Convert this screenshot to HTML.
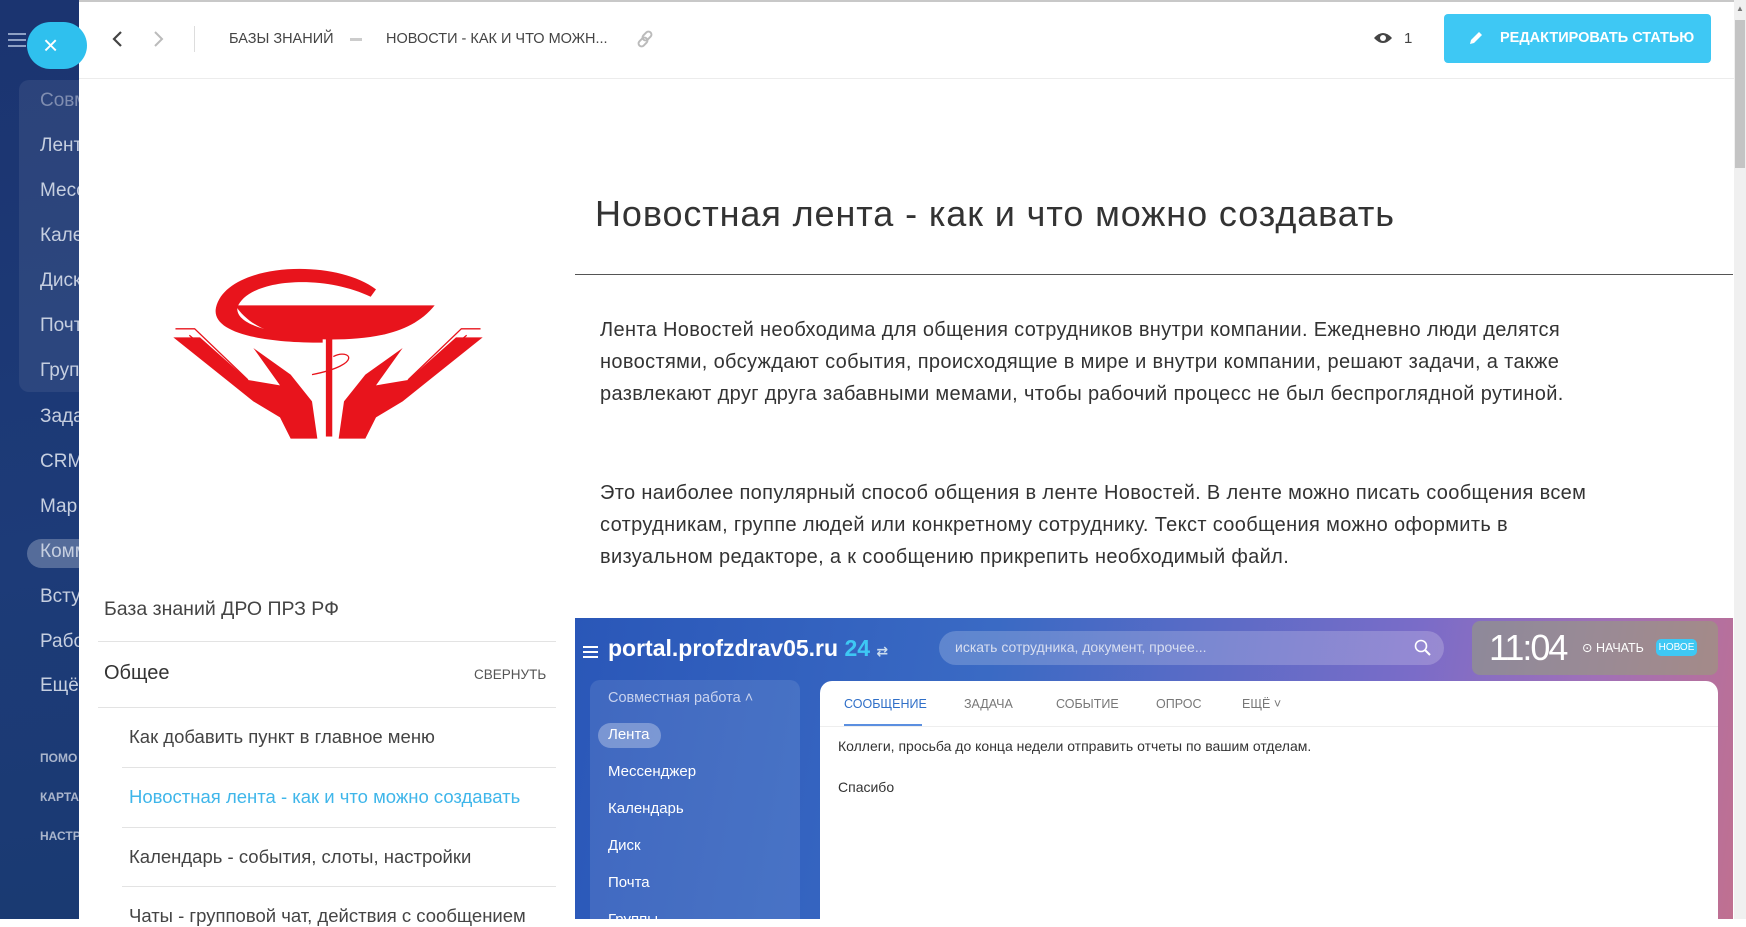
<!DOCTYPE html>
<html><head><meta charset="utf-8"><style>
*{margin:0;padding:0;box-sizing:border-box}
body{width:1746px;height:919px;overflow:hidden;position:relative;background:#fff;font-family:"Liberation Sans","DejaVu Sans",sans-serif;color:#333}
.a{position:absolute;white-space:nowrap}
#side{position:absolute;left:0;top:0;width:79px;height:919px;background:linear-gradient(170deg,#1b3470 0%,#1d3b78 60%,#1a3a72 100%);overflow:hidden}
#side .i{position:absolute;left:40px;font-size:19px;color:#c6cfe0}
#side .s{position:absolute;left:40px;font-size:12px;font-weight:bold;color:#aab5cc}
.hdr{font-size:14.5px;color:#444}
.p{position:absolute;left:600px;font-size:20px;line-height:32px;color:#333;white-space:nowrap;letter-spacing:0.35px}
.li{position:absolute;left:129px;font-size:18.5px;color:#444}
.ln{position:absolute;height:1px;background:#e3e3e3}
#shot{position:absolute;left:575px;top:618px;width:1158px;height:301px;background:linear-gradient(100deg,#2a57b8 0%,#3a6ac4 35%,#7a6cc8 70%,#a070b8 85%,#c07090 100%);overflow:hidden}
</style></head><body>

<div id="side">
  <div class="a" style="left:8px;top:33px;width:18px;height:2px;background:#8ea0c4;box-shadow:0 6px 0 #8ea0c4,0 12px 0 #8ea0c4"></div>
  <div class="a" style="left:19px;top:80px;width:70px;height:312px;background:rgba(255,255,255,0.07);border-radius:10px"></div>
  <div class="i" style="top:90px;color:#7f8db0">Совм</div>
  <div class="i" style="top:135px">Лент</div>
  <div class="i" style="top:180px">Месс</div>
  <div class="i" style="top:225px">Кале</div>
  <div class="i" style="top:270px">Диск</div>
  <div class="i" style="top:315px">Почт</div>
  <div class="i" style="top:360px">Груп</div>
  <div class="i" style="top:406px">Зада</div>
  <div class="i" style="top:451px">CRM</div>
  <div class="i" style="top:496px">Мар</div>
  <div class="a" style="left:27px;top:539px;width:70px;height:29px;background:rgba(255,255,255,0.25);border-radius:15px"></div>
  <div class="i" style="top:541px">Комм</div>
  <div class="i" style="top:586px">Всту</div>
  <div class="i" style="top:631px">Рабо</div>
  <div class="i" style="top:675px">Ещё</div>
  <div class="s" style="top:751px">ПОМО</div>
  <div class="s" style="top:790px">КАРТА</div>
  <div class="s" style="top:829px">НАСТР</div>
</div>
<div class="a" style="left:27px;top:22px;width:60px;height:47px;background:#2fc0ee;border-radius:24px"></div>
<div class="a" style="left:43px;top:30px;color:#fff;font-size:26px;line-height:30px">×</div>

<!-- header -->
<div class="a" style="left:79px;top:0;width:1655px;height:2px;background:#c8c8c8"></div>
<div class="a" style="left:79px;top:78px;width:1655px;height:1px;background:#ececec"></div>
<svg class="a" style="left:111px;top:30px" width="14" height="18"><path d="M10 2 L3 9 L10 16" stroke="#444" stroke-width="2.2" fill="none"/></svg>
<svg class="a" style="left:151px;top:30px" width="14" height="18"><path d="M4 2 L11 9 L4 16" stroke="#bbb" stroke-width="2" fill="none"/></svg>
<div class="a" style="left:194px;top:26px;width:1px;height:26px;background:#ddd"></div>
<div class="a hdr" style="left:229px;top:31px">БАЗЫ ЗНАНИЙ</div>
<div class="a" style="left:350px;top:38px;width:12px;height:3px;background:#ccc"></div>
<div class="a hdr" style="left:386px;top:31px">НОВОСТИ - КАК И ЧТО МОЖН...</div>
<svg class="a" style="left:637px;top:30px" width="18" height="18"><g stroke="#bbb" stroke-width="2" fill="none"><rect x="7" y="1" width="6" height="10" rx="3" transform="rotate(45 10 6)"/><rect x="3" y="7" width="6" height="10" rx="3" transform="rotate(45 6 12)"/></g></svg>
<svg class="a" style="left:1373px;top:31px" width="20" height="14"><path d="M1 7 Q10 -3 19 7 Q10 17 1 7Z" fill="#444"/><circle cx="10" cy="7" r="3" fill="#fff"/></svg>
<div class="a" style="left:1404px;top:30px;font-size:15px;color:#444">1</div>
<div class="a" style="left:1444px;top:14px;width:267px;height:49px;background:#3ec8f4;border-radius:4px"></div>
<svg class="a" style="left:1468px;top:30px" width="16" height="16"><path d="M2 14 L3 10 L11 2 L14 5 L6 13Z" fill="#fff"/></svg>
<div class="a" style="left:1500px;top:30px;font-size:14.5px;font-weight:bold;color:#fff">РЕДАКТИРОВАТЬ СТАТЬЮ</div>
<!-- scrollbar -->
<div class="a" style="left:1734px;top:0;width:12px;height:919px;background:#f0f0f0"></div>
<div class="a" style="left:1735px;top:20px;width:10px;height:148px;background:#c4c4c4"></div>
<div class="a" style="left:1736px;top:4px;font-size:8px;color:#777">▲</div>

<!-- logo -->
<svg class="a" style="left:168px;top:252px" width="320" height="192" viewBox="15 10 300 180" preserveAspectRatio="none">
<g fill="#e8141c">
<path d="M60 62 C70 20 170 15 210 45 L205 52 C160 30 90 35 80 62 C78 80 120 88 160 88 L160 95 C100 95 55 85 60 62Z"/>
<path d="M78 60 L265 60 C245 85 210 92 168 92 C125 92 95 85 78 60Z"/>
<rect x="163" y="88" width="6" height="95"/>
<path d="M20 90 L95 150 L120 165 L130 185 L155 185 L150 150 L130 125 L95 100 L120 135 L90 130 L45 90Z"/>
<path d="M310 90 L235 150 L210 165 L200 185 L175 185 L180 150 L200 125 L235 100 L210 135 L240 130 L285 90Z"/>
</g>
<g stroke="#e8141c" fill="none" stroke-width="1.2"><path d="M22 82 L40 82 L90 130 M35 88 L85 130"/><path d="M308 82 L290 82 L240 130 M295 88 L245 130"/><path d="M150 125 C200 115 185 100 170 108"/></g>
</svg>

<!-- left nav -->
<div class="a" style="left:104px;top:598px;font-size:19.5px;color:#444">База знаний ДРО ПРЗ РФ</div>
<div class="ln" style="left:98px;top:641px;width:458px"></div>
<div class="a" style="left:104px;top:662px;font-size:20px;color:#333">Общее</div>
<div class="a" style="left:474px;top:667px;font-size:13.5px;color:#555">СВЕРНУТЬ</div>
<div class="ln" style="left:98px;top:707px;width:458px"></div>
<div class="li" style="top:726px">Как добавить пункт в главное меню</div>
<div class="ln" style="left:122px;top:767px;width:434px"></div>
<div class="li" style="top:786px;color:#3fb6ea">Новостная лента - как и что можно создавать</div>
<div class="ln" style="left:122px;top:827px;width:434px"></div>
<div class="li" style="top:846px">Календарь - события, слоты, настройки</div>
<div class="ln" style="left:122px;top:886px;width:434px"></div>
<div class="li" style="top:905px">Чаты - групповой чат, действия с сообщением</div>

<!-- article -->
<div class="a" style="left:595px;top:193px;font-size:36px;letter-spacing:0.9px;color:#333">Новостная лента - как и что можно создавать</div>
<div class="a" style="left:575px;top:274px;width:1158px;height:1px;background:#555"></div>
<div class="p" style="top:314px">Лента Новостей необходима для общения сотрудников внутри компании. Ежедневно люди делятся<br>новостями, обсуждают события, происходящие в мире и внутри компании, решают задачи, а также<br>развлекают друг друга забавными мемами, чтобы рабочий процесс не был беспроглядной рутиной.</div>
<div class="p" style="top:477px">Это наиболее популярный способ общения в ленте Новостей. В ленте можно писать сообщения всем<br>сотрудникам, группе людей или конкретному сотруднику. Текст сообщения можно оформить в<br>визуальном редакторе, а к сообщению прикрепить необходимый файл.</div>

<!-- embedded screenshot -->
<div id="shot">
  <div class="a" style="left:8px;top:28px;width:15px;height:2px;background:#fff;box-shadow:0 5px 0 #fff,0 10px 0 #fff"></div>
  <div class="a" style="left:33px;top:17px;font-size:23px;font-weight:bold;color:#fff">portal.profzdrav05.ru <span style="color:#3ec8f4">24</span> <span style="font-size:14px;color:#cde">⇄</span></div>
  <div class="a" style="left:364px;top:13px;width:505px;height:34px;border-radius:17px;background:rgba(255,255,255,0.2)"></div>
  <div class="a" style="left:380px;top:21px;font-size:14px;color:#d8def0">искать сотрудника, документ, прочее...</div>
  <svg class="a" style="left:839px;top:21px" width="18" height="18"><circle cx="7" cy="7" r="5.5" stroke="#fff" stroke-width="1.6" fill="none"/><path d="M11 11 L16 16" stroke="#fff" stroke-width="2"/></svg>
  <div class="a" style="left:897px;top:3px;width:246px;height:54px;border-radius:8px;background:rgba(150,160,120,0.55)"></div>
  <div class="a" style="left:914px;top:9px;font-size:36px;letter-spacing:-2px;color:#fff;font-weight:300">11:04</div>
  <div class="a" style="left:1007px;top:22px;font-size:12.5px;color:#fff">⊙ НАЧАТЬ</div>
  <div class="a" style="left:1081px;top:21px;width:41px;height:17px;border-radius:5px;background:#3ec8f4;color:#fff;font-size:10px;text-align:center;line-height:17px">НОВОЕ</div>
  <div class="a" style="left:15px;top:62px;width:210px;height:260px;border-radius:10px;background:rgba(255,255,255,0.1)"></div>
  <div class="a" style="left:33px;top:72px;font-size:14.5px;color:#c8d2ee">Совместная работа ˄</div>
  <div class="a" style="left:23px;top:105px;width:63px;height:25px;border-radius:13px;background:rgba(255,255,255,0.3)"></div>
  <div class="a" style="left:33px;top:108px;font-size:15px;color:#fff">Лента</div>
  <div class="a" style="left:33px;top:145px;font-size:15px;color:#fff">Мессенджер</div>
  <div class="a" style="left:33px;top:182px;font-size:15px;color:#fff">Календарь</div>
  <div class="a" style="left:33px;top:219px;font-size:15px;color:#fff">Диск</div>
  <div class="a" style="left:33px;top:256px;font-size:15px;color:#fff">Почта</div>
  <div class="a" style="left:33px;top:293px;font-size:15px;color:#fff">Группы</div>
  <div class="a" style="left:245px;top:63px;width:898px;height:260px;border-radius:12px 12px 0 0;background:#fff"></div>
  <div class="a" style="left:245px;top:108px;width:898px;height:1px;background:#eee"></div>
  <div class="a" style="left:269px;top:79px;font-size:12.5px;color:#2f6fc8">СООБЩЕНИЕ</div>
  <div class="a" style="left:269px;top:106px;width:78px;height:2px;background:#5b8fe0"></div>
  <div class="a" style="left:389px;top:79px;font-size:12.5px;color:#777">ЗАДАЧА</div>
  <div class="a" style="left:481px;top:79px;font-size:12.5px;color:#777">СОБЫТИЕ</div>
  <div class="a" style="left:581px;top:79px;font-size:12.5px;color:#777">ОПРОС</div>
  <div class="a" style="left:667px;top:79px;font-size:12.5px;color:#777">ЕЩЁ ˅</div>
  <div class="a" style="left:263px;top:120px;font-size:14px;color:#333">Коллеги, просьба до конца недели отправить отчеты по вашим отделам.</div>
  <div class="a" style="left:263px;top:161px;font-size:14px;color:#333">Спасибо</div>
</div>
</body></html>
